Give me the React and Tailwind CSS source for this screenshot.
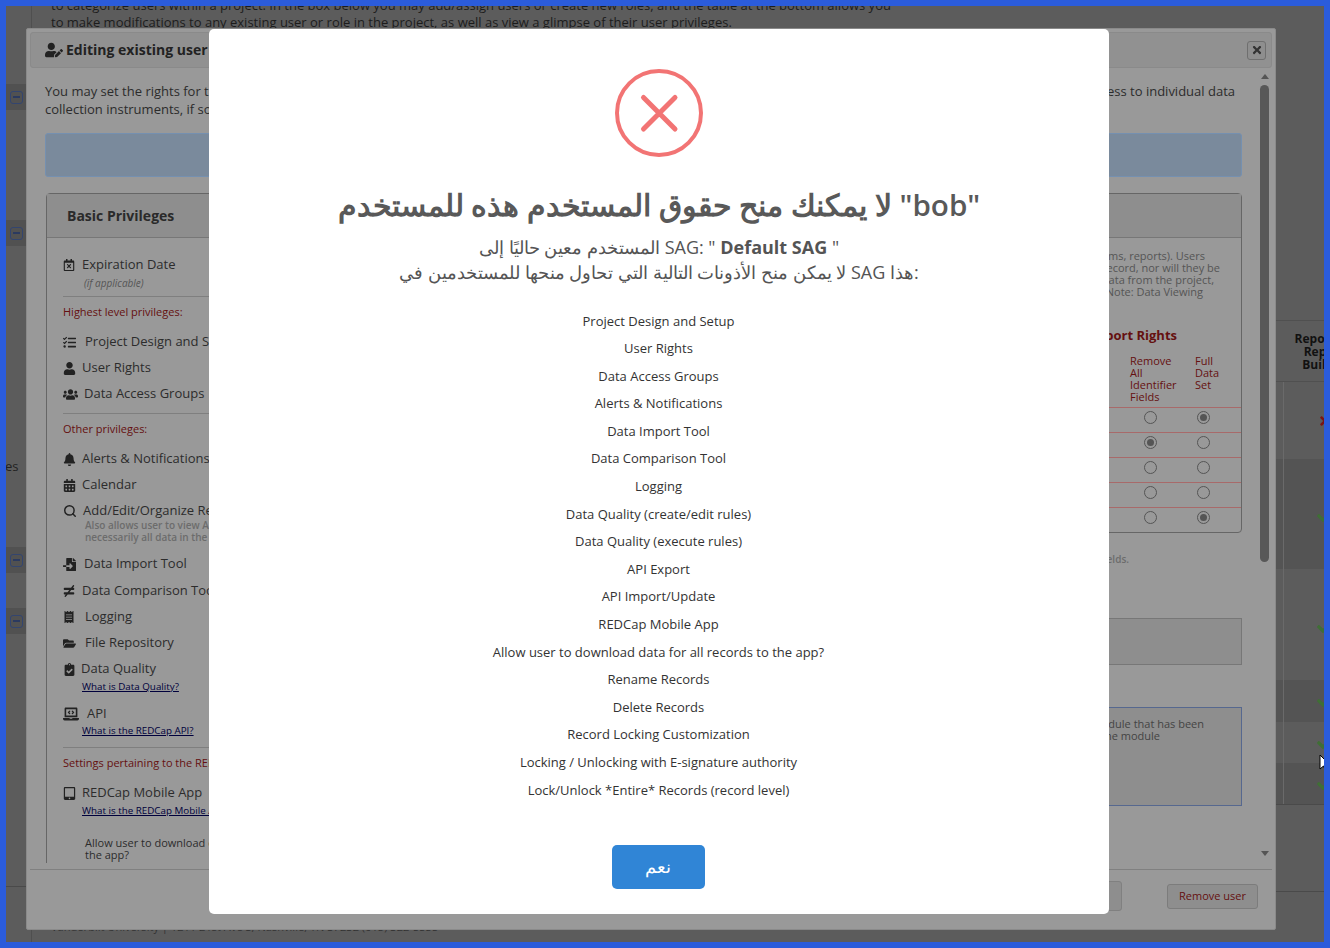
import React from 'react'
import { Search } from 'lucide-react'
import {
  FaUserEdit, FaTimes, FaRegCalendarTimes, FaTasks, FaUser, FaUsers, FaBell, FaCalendarAlt,
  FaFileImport, FaNotEqual, FaReceipt, FaFolderOpen, FaClipboardCheck, FaLaptopCode, FaTabletAlt, FaCheck,
} from 'react-icons/fa'

const deniedRights = [
  'Project Design and Setup',
  'User Rights',
  'Data Access Groups',
  'Alerts & Notifications',
  'Data Import Tool',
  'Data Comparison Tool',
  'Logging',
  'Data Quality (create/edit rules)',
  'Data Quality (execute rules)',
  'API Export',
  'API Import/Update',
  'REDCap Mobile App',
  'Allow user to download data for all records to the app?',
  'Rename Records',
  'Delete Records',
  'Record Locking Customization',
  'Locking / Unlocking with E-signature authority',
  'Lock/Unlock *Entire* Records (record level)',
]

const exportRows = [
  { id: 1, checked: 'full' },
  { id: 2, checked: 'remove' },
  { id: 3, checked: null },
  { id: 4, checked: null },
  { id: 5, checked: 'full' },
]

const Row = ({ icon, width, children }) => (
  <div className="flex h-[26px] items-center whitespace-nowrap text-[13px] text-[#2c2c2c]">
    <span className={`flex shrink-0 items-center text-[13px] text-[#222] ${width}`}>{icon}</span>
    {children}
  </div>
)

const Heading = ({ className, children }) => (
  <div className={`h-3 whitespace-nowrap text-[11px] leading-3 text-[#651010] ${className}`}>{children}</div>
)

const HelpLink = ({ className, children }) => (
  <div className={`h-3 whitespace-nowrap text-[9.8px] leading-3 text-[#00003c] underline ${className}`}>{children}</div>
)

const Radio = ({ on }) => (
  <span className="flex h-[13px] w-[13px] items-center justify-center rounded-full border border-[#555]">
    {on && <span className="h-[7px] w-[7px] rounded-full bg-[#555]" />}
  </span>
)

const LeftStripButton = ({ className }) => (
  <div className={`flex h-[26px] w-5 items-center justify-center bg-[#515151] ${className}`}>
    <span className="flex h-[13px] w-[13px] items-center justify-center rounded-[3px] border-[1.5px] border-[#33456f]">
      <span className="h-[2px] w-[7px] bg-[#2b3a60]" />
    </span>
  </div>
)

const TableCell = ({ children, className }) => (
  <div className={`flex w-[96px] pl-[7px] ${className}`}>
    <div className="flex w-[82px] items-center justify-center border-l border-[#6a6a6a]">{children}</div>
  </div>
)

const BasicPrivileges = () => (
  <div className="h-[700px] w-[620px] shrink-0 rounded-t-[4px] border border-[#666]">
    <div className="flex h-[44px] items-center border-b border-[#777] bg-[#8e8e8e] pl-5 text-sm font-bold text-[#2a2a2a]">Basic Privileges</div>
    <div className="pl-4 pt-[14px]">
      <Row icon={<FaRegCalendarTimes className="text-[12px]" />} width="w-[19px]">Expiration Date</Row>
      <div className="-mt-px h-3 pl-[21px] text-[10px] italic leading-3 text-[#555]">(if applicable)</div>
      <div className="mt-[7px] h-px bg-[#7f7f7f]" />
      <Heading className="mt-[9px]">Highest level privileges:</Heading>
      <div className="mt-[11px]">
        <Row icon={<FaTasks />} width="w-[22px]">Project Design and Setup</Row>
        <Row icon={<FaUser />} width="w-[19px]">User Rights</Row>
        <Row icon={<FaUsers className="text-[15px]" />} width="w-[21px]">Data Access Groups</Row>
      </div>
      <div className="mt-[6px] h-px bg-[#7f7f7f]" />
      <Heading className="mt-[9px]">Other privileges:</Heading>
      <div className="mt-[11px]">
        <Row icon={<FaBell />} width="w-[19px]">Alerts &amp; Notifications</Row>
        <Row icon={<FaCalendarAlt />} width="w-[19px]">Calendar</Row>
        <Row icon={<Search size={14} strokeWidth={2.5} />} width="w-[20px]">Add/Edit/Organize Reports</Row>
      </div>
      <div className="-mt-[5px] whitespace-nowrap pl-[22px] text-[10px] font-semibold leading-3 text-[#6c6c6c]">
        <div>Also allows user to view ALL reports (but not</div>
        <div>necessarily all data in the reports)</div>
      </div>
      <div className="mt-2">
        <Row icon={<FaFileImport />} width="w-[21px]">Data Import Tool</Row>
      </div>
      <div className="mt-px">
        <Row icon={<FaNotEqual className="text-[12px]" />} width="w-[19px]">Data Comparison Tool</Row>
        <Row icon={<FaReceipt className="text-[12px]" />} width="w-[22px]">Logging</Row>
        <Row icon={<FaFolderOpen />} width="w-[22px]">File Repository</Row>
        <Row icon={<FaClipboardCheck />} width="w-[18px]">Data Quality</Row>
      </div>
      <HelpLink className="-mt-px pl-[19px]">What is Data Quality?</HelpLink>
      <div className="mt-2">
        <Row icon={<FaLaptopCode className="text-[16px]" />} width="w-[24px]">API</Row>
      </div>
      <HelpLink className="-mt-[2px] pl-[19px]">What is the REDCap API?</HelpLink>
      <div className="mt-[10px] h-px bg-[#7f7f7f]" />
      <Heading className="mt-[9px]">Settings pertaining to the REDCap Mobile App:</Heading>
      <div className="mt-[11px]">
        <Row icon={<FaTabletAlt />} width="w-[19px]">REDCap Mobile App</Row>
      </div>
      <HelpLink className="-mt-px pl-[19px]">What is the REDCap Mobile App?</HelpLink>
      <div className="mt-5 pl-[22px] text-[11px] leading-3 text-[#2c2c2c]">
        <div className="whitespace-nowrap">Allow user to download data for all records to</div>
        <div>the app?</div>
      </div>
    </div>
  </div>
)

const RightPanels = () => (
  <div className="flex w-[570px] shrink-0 flex-col">
    <div className="flex h-[340px] flex-col rounded-[4px] border border-[#666]">
      <div className="h-[44px] shrink-0 border-b border-[#777] bg-[#8e8e8e]" />
      <div className="flex flex-col items-end pt-3 text-[11px] leading-3 text-[#555]">
        <div className="pr-[36px]">(instruments, forms, reports). Users</div>
        <div className="pr-[21px]">any record, nor will they be</div>
        <div className="pr-[27px]">able to export data from the project,</div>
        <div className="pr-[38px]">Note: Data Viewing</div>
      </div>
      <div className="mt-[29px] pr-[64px] text-right text-[13px] font-bold leading-4 text-[#651010]">Data Export Rights</div>
      <div className="mt-3 flex justify-end pr-px text-[11px] leading-3 text-[#651010]">
        <div className="w-[65px]">Remove<br />All<br />Identifier<br />Fields</div>
        <div className="w-[45px]">Full<br />Data<br />Set</div>
      </div>
      <div className="mt-1">
        {exportRows.map((row) => (
          <div key={row.id} className="flex h-[25px] items-start justify-end gap-10 border-t border-[#a86a6a] pr-[31px] pt-[3px]">
            <Radio on={row.checked === 'remove'} />
            <Radio on={row.checked === 'full'} />
          </div>
        ))}
      </div>
    </div>
    <div className="mt-5 pr-[113px] text-right text-[10px] font-semibold leading-3 text-[#6c6c6c]">identifier fields.</div>
    <div className="mt-[53px] h-[47px] border border-[#777] bg-[#8e8e8e]" />
    <div className="mt-[42px] h-[99px] border border-[#56688f] bg-[#8e8e8e] pt-[10px] text-[11px] leading-3 text-[#444]">
      <div className="pr-[37px] text-right">data collection module that has been</div>
      <div className="pr-[81px] text-right">enabled in the module</div>
    </div>
  </div>
)

const UserRightsDialog = () => (
  <div className="absolute left-[20px] top-[22px] flex h-[902px] w-[1250px] flex-col rounded-[2px] border border-[#8a8a8a] bg-[#999] p-[3px] font-['Open_Sans',sans-serif]">
    <div className="flex h-[36px] shrink-0 items-center justify-between rounded-[3px] border border-[#8a8a8a] bg-[#919191] pl-[14px] pr-[5px]">
      <div className="flex items-center gap-[3px] text-sm font-bold text-[#222]">
        <FaUserEdit className="text-[18px]" />
        Editing existing user
      </div>
      <div className="flex h-[19px] w-[19px] items-center justify-center rounded-[3px] border border-[#6f6f6f] bg-[#8e8e8e] text-[#333]">
        <FaTimes className="text-[12px]" />
      </div>
    </div>
    <div className="flex min-h-0 flex-1">
      <div className="min-w-0 flex-1 overflow-hidden pl-[15px] pr-[15px] pt-[14px]">
        <div className="flex justify-between pr-[7px] text-[13px] leading-[18px] text-[#2c2c2c]">
          <span>You may set the rights for this user below</span>
          <span>access to individual data</span>
        </div>
        <div className="text-[13px] leading-[18px] text-[#2c2c2c]">collection instruments, if so desired.</div>
        <div className="mt-[15px] h-11 rounded-[3px] border border-[#7590b0] bg-[#7a8a9c]" />
        <div className="ml-px mt-4 flex justify-between">
          <BasicPrivileges />
          <RightPanels />
        </div>
      </div>
      <div className="flex w-[15px] shrink-0 flex-col items-center">
        <span className="mt-[6px] h-0 w-0 border-x-[4px] border-b-[5px] border-x-transparent border-b-[#555]" />
        <span className="mt-[6px] h-[477px] w-[9px] rounded-[5px] bg-[#585858]" />
        <span className="mb-[7px] mt-auto h-0 w-0 border-x-[4px] border-t-[5px] border-x-transparent border-t-[#555]" />
      </div>
    </div>
    <div className="mt-[6px] flex h-[57px] shrink-0 items-center justify-end gap-[45px] border-t border-[#808080] pb-1 pr-[14px]">
      <div className="h-[30px] w-[100px] rounded-[3px] border border-[#808080] bg-[#8e8e8e]" />
      <div className="flex h-[25px] w-[91px] items-center justify-center rounded-[3px] border border-[#7c7c7c] bg-[#8e8e8e] text-[11px] text-[#651010]">Remove user</div>
    </div>
  </div>
)

const ErrorAlert = () => (
  <div dir="ltr" className="absolute left-[203px] top-[23px] flex w-[900px] flex-col items-center rounded-[5px] bg-white pb-[25px] pt-10 font-['Open_Sans',sans-serif]">
    <svg width="88" height="88" viewBox="0 0 88 88" fill="none" stroke="#f27474">
      <circle cx="44" cy="44" r="42" strokeWidth="4" />
      <path d="M28.5 28.5 L60 60 M60 28.5 L28.5 60" strokeWidth="5" strokeLinecap="round" />
    </svg>
    <h2 className="mt-[30px] text-[29.6px] font-semibold leading-9 text-[#595959]">لا يمكنك منح حقوق المستخدم هذه للمستخدم "bob"</h2>
    <div className="mt-3 text-center text-[18px] leading-[25px] text-[#545454]">
      <div>المستخدم معين حاليًا إلى SAG: " <b>Default SAG</b> "</div>
      <div>لا يمكن منح الأذونات التالية التي تحاول منحها للمستخدمين في SAG هذا:</div>
    </div>
    <ul className="mr-px mt-[22.5px] text-center text-[13px] leading-[27.6px] text-[#333]">
      {deniedRights.map((right) => (
        <li key={right}>{right}</li>
      ))}
    </ul>
    <button className="mr-[2px] mt-[40.5px] h-11 w-[93px] rounded-[5px] bg-[#3085d6] text-[18px] text-white">نعم</button>
  </div>
)

const RightStrip = () => (
  <div className="w-12 shrink-0 overflow-hidden pt-[314px]">
    <div className="flex h-[62px] w-[96px] border-y border-[#505050] pl-[7px] text-center text-[12px] font-bold leading-[13px] text-[#111]">
      <div className="flex w-[82px] items-center justify-center">
        <div>Reports &amp;<br />Report<br />Builder</div>
      </div>
    </div>
    <TableCell className="h-[77px] bg-[#5c5c5c]"><FaTimes className="text-[14px] text-[#7a1414]" /></TableCell>
    <TableCell className="h-[110px] bg-[#545454]"><FaCheck className="mt-1 text-[16px] text-[#3f6f35]" /></TableCell>
    <TableCell className="h-[111px] bg-[#5c5c5c]"><FaCheck className="mt-[5px] text-[16px] text-[#3f6f35]" /></TableCell>
    <TableCell className="h-[42px] bg-[#545454]"><FaCheck className="text-[16px] text-[#3f6f35]" /></TableCell>
    <TableCell className="h-[41px] bg-[#5c5c5c]"><FaCheck className="text-[16px] text-[#3f6f35]" /></TableCell>
    <TableCell className="h-[42px] border-b border-[#4a4a4a] bg-[#545454]"><FaCheck className="text-[16px] text-[#3f6f35]" /></TableCell>
    <div className="mt-[86px] h-px w-[96px] bg-[#4a4a4a]" />
  </div>
)

const App = () => (
  <div className="relative h-[948px] w-[1330px] overflow-hidden border-[6px] border-[#2b5cdb] bg-[#5c5c5c] font-['Open_Sans',sans-serif]">
    <div className="flex h-full">
      <div className="w-[25px] shrink-0 pt-[78px]">
        <LeftStripButton />
        <LeftStripButton className="mt-[110px]" />
        <div className="mt-[213px] h-[14px] -translate-x-[1px] text-[13px] leading-[14px] text-[#222]">es</div>
        <LeftStripButton className="mt-[74px]" />
        <LeftStripButton className="mt-[35px]" />
        <div className="mt-[252px] h-px w-5 bg-[#4a4a4a]" />
      </div>
      <div className="flex min-w-0 flex-1 flex-col border-l border-[#4f4f4f] pl-[19px]">
        <div className="-mt-[9px] whitespace-nowrap text-[13px] leading-[17px] text-[#1c1c1c]">
          <div>to categorize users within a project. In the box below you may add/assign users or create new roles, and the table at the bottom allows you</div>
          <div>to make modifications to any existing user or role in the project, as well as view a glimpse of their user privileges.</div>
        </div>
        <div className="mt-auto pb-[7px] text-[11.1px] leading-4 text-[#333]">Vanderbilt University | 1211 21st Ave S, Nashville, TN 37232 (615) 322-5555</div>
      </div>
      <RightStrip />
    </div>
    <UserRightsDialog />
    <ErrorAlert />
    <svg className="absolute left-[1313px] top-[748px]" width="12" height="20" viewBox="0 0 12 20">
      <path d="M1 1 L1 15 L4.5 12 L7 18 L9.5 17 L7 11 L11 11 Z" fill="#fff" stroke="#000" strokeWidth="1" />
    </svg>
  </div>
)

export default App
